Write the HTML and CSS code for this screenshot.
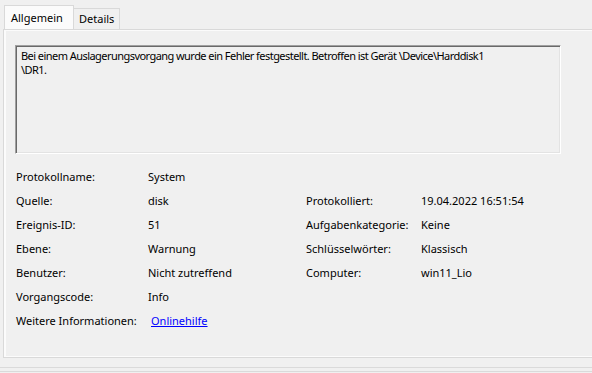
FILE: index.html
```html
<!DOCTYPE html>
<html lang="de">
<head>
    <meta charset="UTF-8">
    <title>Ereigniseigenschaften</title>
    <link rel="stylesheet" href="styles.css">
</head>
<body>
    <div class="tabs">
        <div class="tab active">Allgemein</div>
        <div class="tab">Details</div>
    </div>
    <div class="panel">
        <div class="page">
            <div class="message">Bei einem Auslagerungsvorgang wurde ein Fehler festgestellt. Betroffen ist Gerät \Device\Harddisk1<br>\DR1.</div>

            <div class="props">
                <div class="label">Protokollname:</div>
                <div class="value">System</div>
                <div></div>
                <div></div>

                <div class="label">Quelle:</div>
                <div class="value">disk</div>
                <div class="label">Protokolliert:</div>
                <div class="value">19.04.2022 16:51:54</div>

                <div class="label">Ereignis-ID:</div>
                <div class="value">51</div>
                <div class="label">Aufgabenkategorie:</div>
                <div class="value">Keine</div>

                <div class="label">Ebene:</div>
                <div class="value">Warnung</div>
                <div class="label">Schlüsselwörter:</div>
                <div class="value">Klassisch</div>

                <div class="label">Benutzer:</div>
                <div class="value">Nicht zutreffend</div>
                <div class="label">Computer:</div>
                <div class="value">win11_Lio</div>

                <div class="label">Vorgangscode:</div>
                <div class="value">Info</div>
                <div></div>
                <div></div>

                <div class="label">Weitere Informationen:</div>
                <div class="value"><a href="#" class="link">Onlinehilfe</a></div>
                <div></div>
                <div></div>
            </div>
        </div>
    </div>
    <div class="footer"></div>
</body>
</html>
```

FILE: styles.css
```css
body {
    margin: 0;
    background-color: #f0f0f0;
    font-family: "Noto Sans", sans-serif;
    font-size: 11px;
    color: #000;
    width: 592px;
    height: 373px;
    overflow: hidden;
}
.tabs {
    display: flex;
    align-items: flex-end;
    padding: 6px 0 0 4px;
    height: 23px;
    position: relative;
    z-index: 1;
}
.tab {
    height: 20px;
    line-height: 20px;
    padding: 0 5px;
    border: 1px solid #d9d9d9;
    border-bottom: none;
    border-left: none;
    background-color: #f0f0f0;
}
.tab.active {
    height: 23px;
    line-height: 23px;
    width: 57px;
    border-left: 1px solid #d9d9d9;
    background-color: #fbfbfb;
    padding: 0 5px 0 6px;
}
.panel {
    margin-left: 3px;
    height: 329px;
    border: 1px solid #d9d9d9;
    border-right: none;
    background-color: #fbfbfb;
    padding: 1px 0 1px 2px;
    box-sizing: border-box;
}
.page {
    background-color: #f0f0f0;
    height: 100%;
    padding: 14px 0 0 9px;
    box-sizing: border-box;
}
.message {
    width: 546px;
    height: 109px;
    box-sizing: border-box;
    border: 1px solid;
    border-color: #a0a0a0 #fff #fff #a0a0a0;
    box-shadow: inset 1px 1px 0 #696969, inset -1px -1px 0 #e3e3e3;
    padding: 3px 6px 0 5px;
    line-height: 14px;
    letter-spacing: -0.55px;
}
.props {
    display: grid;
    grid-template-columns: 132px 158px 115px 1fr;
    grid-auto-rows: 24px;
    margin: 10px 0 0 1px;
    align-items: center;
}
.link {
    color: #0000ff;
    margin-left: 3px;
}
.footer {
    margin-top: 9px;
    height: 3px;
    border-top: 1px solid #dadada;
    border-bottom: 1px solid #dadada;
}
```
